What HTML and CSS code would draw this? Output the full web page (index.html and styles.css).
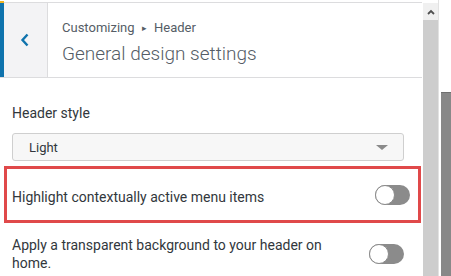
FILE: index.html
```html
<!DOCTYPE html>
<html lang="en">
<head>
  <meta charset="UTF-8" />
  <title>Customizing Header</title>
  <link rel="stylesheet" href="styles.css">
</head>
<body>
  <div class="frame">
    <div class="panel">
      <span class="notch"></span>
      <div class="head">
        <div class="back">
          <svg width="10" height="14" viewBox="0 0 10 14"><path d="M7.5 1.5 L2.5 7 L7.5 12.5" fill="none" stroke="#0f73ad" stroke-width="2.4"/></svg>
        </div>
        <div class="titles">
          <div class="crumb">Customizing <span class="sep">&#9656;</span> Header</div>
          <div class="title">General design settings</div>
        </div>
      </div>
      <div class="content">
        <div class="label">Header style</div>
        <div class="select">
          <span>Light</span>
          <span class="caret"></span>
        </div>
        <div class="row highlight">
          <div class="row-text">Highlight contextually active menu items</div>
          <div class="toggle"><span class="knob"></span></div>
        </div>
        <div class="row second">
          <div class="row-text">Apply a transparent background to your header on home.</div>
          <div class="toggle"><span class="knob"></span></div>
        </div>
      </div>
    </div>
    <div class="scrollbar">
      <div class="arrow">
        <svg width="8" height="6" viewBox="0 0 8 6"><path d="M1 5 L4 2 L7 5" fill="none" stroke="#505050" stroke-width="1.8"/></svg>
      </div>
      <div class="thumb"></div>
    </div>
    <div class="edge"></div>
    <div class="preview">
      <div class="preview-top"></div>
      <div class="preview-body"></div>
    </div>
  </div>
</body>
</html>
```

FILE: styles.css
```css
body {
  margin: 0;
  font-family: Roboto, "Noto Sans", sans-serif;
  color: #32373c;
  background-color: #fff;
  overflow: hidden;
}
.frame {
  display: flex;
  width: 451px;
  height: 276px;
}
.panel {
  position: relative;
  width: 422px;
  padding-top: 2px;
  border-top: 1px solid transparent;
  box-sizing: border-box;
}
.notch {
  position: absolute;
  left: 0;
  top: 0;
  width: 4px;
  height: 2px;
  background-color: #f0b323;
}
.head {
  display: flex;
  height: 74px;
  border-top: 1px solid #dcdcde;
  border-bottom: 1px solid #dcdcde;
  margin-top: -1px;
}
.back {
  width: 43px;
  border-left: 4px solid #0f73ad;
  border-right: 1px solid #dcdcde;
  background-color: #f3f3f5;
  display: flex;
  align-items: center;
  justify-content: center;
}
.back svg {
  margin-left: -2px;
}
.titles {
  padding-left: 14px;
  padding-top: 16px;
}
.crumb {
  font-size: 13px;
  line-height: 18px;
  color: #555d66;
}
.sep {
  font-size: 9px;
  margin: 0 4px;
  vertical-align: 1px;
}
.title {
  margin-top: 5px;
  font-size: 19px;
  font-weight: 300;
  line-height: 24px;
  color: #555d66;
}
.content {
  padding: 0 18px 0 12px;
}
.label {
  margin-top: 26px;
  font-size: 14px;
  line-height: 18px;
}
.select {
  margin-top: 11px;
  height: 28px;
  box-sizing: border-box;
  border: 1px solid #cfcfcf;
  border-radius: 3px;
  background-color: #f7f7f7;
  display: flex;
  align-items: center;
  justify-content: space-between;
  padding: 0 15px 0 16px;
  font-size: 13px;
}
.caret {
  width: 0;
  height: 0;
  border-left: 6px solid transparent;
  border-right: 6px solid transparent;
  border-top: 5px solid #8a8a8a;
}
.row {
  display: flex;
  align-items: center;
  justify-content: space-between;
  font-size: 14px;
  line-height: 18px;
}
.highlight {
  margin: 5px -17px 0 -8px;
  height: 57px;
  box-sizing: border-box;
  border: 3px solid #e0494a;
  padding: 0 8px 0 5px;
}
.highlight .row-text {
  margin-top: 4px;
}
.second {
  margin-top: 13px;
}
.row-text {
  max-width: 330px;
}
.toggle {
  position: relative;
  width: 35px;
  height: 20px;
  border-radius: 10px;
  background-color: #8b8b8b;
  flex-shrink: 0;
}
.knob {
  position: absolute;
  left: 0;
  top: 0;
  width: 20px;
  height: 20px;
  box-sizing: border-box;
  border-radius: 50%;
  background-color: #fff;
  border: 1px solid #8b8b8b;
}
.scrollbar {
  width: 15px;
  margin-left: 1px;
  margin-top: 3px;
  display: flex;
  flex-direction: column;
}
.arrow {
  height: 17px;
  background-color: #f0f0f0;
  display: flex;
  align-items: center;
  justify-content: center;
}
.thumb {
  flex: 1;
  background-color: #cdcdcd;
}
.edge {
  width: 3px;
  border-left: 1px solid #e2e2e2;
  box-sizing: border-box;
}
.preview {
  flex: 1;
  display: flex;
  flex-direction: column;
}
.preview-top {
  height: 92px;
  border-bottom: 1px solid #6f6f6f;
}
.preview-body {
  flex: 1;
  background-color: #888;
}
```
